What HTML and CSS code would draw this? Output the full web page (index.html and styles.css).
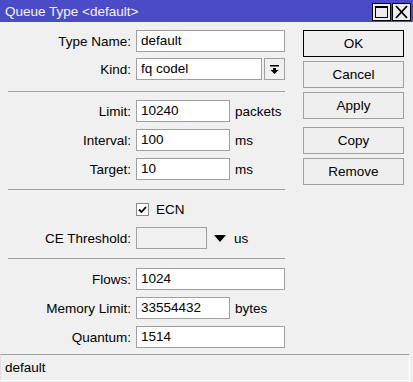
FILE: index.html
```html
<!DOCTYPE html>
<html>
<head>
<meta charset="utf-8">
<title>Queue Type</title>
<link rel="stylesheet" href="styles.css">
</head>
<body>
<div class="window">
  <div class="titlebar">
    <span class="title">Queue Type &lt;default&gt;</span>
    <div class="winbtns">
      <span class="wbtn"><svg width="17" height="16" viewBox="0 0 17 16"><rect x="2.5" y="2.5" width="12" height="11" fill="none" stroke="#000" stroke-width="1"/><line x1="2.5" y1="3" x2="14.5" y2="3" stroke="#000" stroke-width="2"/></svg></span>
      <span class="wbtn"><svg width="17" height="16" viewBox="0 0 17 16"><path d="M3 2 L14 14 M14 2 L3 14" stroke="#000" stroke-width="1.8" fill="none"/></svg></span>
    </div>
  </div>
  <div class="main">
    <div class="form">
      <div class="section s1">
        <div class="row"><span class="lbl">Type Name:</span><span class="field wide">default</span></div>
        <div class="row"><span class="lbl">Kind:</span><span class="field kind">fq codel</span>
          <span class="dropbtn"><svg width="11" height="11" viewBox="0 0 11 11"><rect x="1" y="1" width="9" height="1.5" fill="#000"/><path d="M4 4 H7 V6 H9.5 L5.5 10 L1.5 6 H4 Z" fill="#000"/></svg></span>
        </div>
      </div>
      <div class="sep"></div>
      <div class="section">
        <div class="row"><span class="lbl">Limit:</span><span class="field short">10240</span><span class="unit">packets</span></div>
        <div class="row"><span class="lbl">Interval:</span><span class="field short">100</span><span class="unit">ms</span></div>
        <div class="row"><span class="lbl">Target:</span><span class="field short">10</span><span class="unit">ms</span></div>
      </div>
      <div class="sep"></div>
      <div class="section">
        <div class="row"><span class="lbl"></span><span class="check"><svg width="11" height="11" viewBox="0 0 11 11"><path d="M2 5.5 L4.5 8 L9 3" stroke="#000" stroke-width="1.8" fill="none"/></svg></span><span class="checktext">ECN</span></div>
        <div class="row"><span class="lbl">CE Threshold:</span><span class="field ce"></span>
          <svg class="tri" width="12" height="7" viewBox="0 0 12 7"><path d="M0 0 H12 L6 7 Z" fill="#000"/></svg><span class="unit2">us</span>
        </div>
      </div>
      <div class="sep"></div>
      <div class="section s4">
        <div class="row"><span class="lbl">Flows:</span><span class="field wide">1024</span></div>
        <div class="row"><span class="lbl">Memory Limit:</span><span class="field short">33554432</span><span class="unit">bytes</span></div>
        <div class="row"><span class="lbl">Quantum:</span><span class="field wide">1514</span></div>
      </div>
    </div>
    <div class="buttons">
      <span class="btn default">OK</span>
      <span class="btn">Cancel</span>
      <span class="btn">Apply</span>
      <span class="btn gapped">Copy</span>
      <span class="btn">Remove</span>
    </div>
  </div>
  <div class="status">default</div>
</div>
</body>
</html>
```

FILE: styles.css
```css
html, body{
    margin:0;
    padding:0;
    background:#f0f0f0;
}
body{
    font-family:"Liberation Sans", Arial, sans-serif;
    font-size:13.5px;
    color:#000;
}
.window{
    width:413px;
    height:382px;
    background:#f0f0f0;
    overflow:hidden;
}
.titlebar{
    height:22px;
    background:#4b4bc8;
    display:flex;
    align-items:center;
    justify-content:space-between;
}
.title{
    color:#f4f4ff;
    padding-left:5px;
}
.winbtns{
    display:flex;
    gap:1px;
    padding-right:2px;
    margin-top:1px;
}
.wbtn{
    width:17px;
    height:16px;
    border:1px solid #000;
    background:#ecebf0;
    display:block;
}
.wbtn svg{
    display:block;
}
.main{
    display:flex;
}
.form{
    width:285px;
}
.section{
    padding:8px 0 9px;
    display:flex;
    flex-direction:column;
    gap:7px;
}
.s1{
    gap:6px;
    padding-bottom:11px;
}
.s4{
    padding-top:9px;
    padding-bottom:6px;
}
.sep{
    height:1px;
    margin-left:8px;
    background:#a0a0a0;
}
.row{
    display:flex;
    align-items:center;
    height:22px;
}
.lbl{
    width:131px;
    margin-right:5px;
    text-align:right;
    white-space:nowrap;
}
.field{
    box-sizing:border-box;
    height:22px;
    line-height:20px;
    border:1px solid #a0a0a0;
    background:#fff;
    padding-left:4px;
}
.wide{ width:149px; }
.kind{ width:126px; }
.short{ width:94px; }
.ce{
    width:71px;
    background:#f0f0f0;
}
.dropbtn{
    box-sizing:border-box;
    width:21px;
    height:22px;
    margin-left:2px;
    border:1px solid #a0a0a0;
    background:#f0f0f0;
    display:flex;
    align-items:center;
    justify-content:center;
}
.dropbtn svg{ display:block; }
.unit{ margin-left:5px; }
.unit2{ margin-left:8px; }
.tri{
    margin-left:7px;
    display:block;
}
.check{
    box-sizing:border-box;
    width:13px;
    height:13px;
    border:1px solid #8a8a8a;
    background:#fff;
    display:flex;
    align-items:center;
    justify-content:center;
}
.checktext{ margin-left:7px; }
.buttons{
    margin-left:18px;
    padding-top:8px;
    display:flex;
    flex-direction:column;
    gap:4px;
}
.btn{
    box-sizing:border-box;
    width:101px;
    height:27px;
    border:1px solid #a0a0a0;
    background:#efefef;
    display:flex;
    align-items:center;
    justify-content:center;
}
.btn.default{
    border-color:#000;
}
.btn.gapped{
    margin-top:4px;
}
.status{
    box-sizing:border-box;
    width:410px;
    height:27px;
    border-top:1px solid #a0a0a0;
    border-left:1px solid #e0e0e0;
    border-right:1px solid #fff;
    border-bottom:1px solid #fff;
    padding-left:4px;
    line-height:25px;
}
```
